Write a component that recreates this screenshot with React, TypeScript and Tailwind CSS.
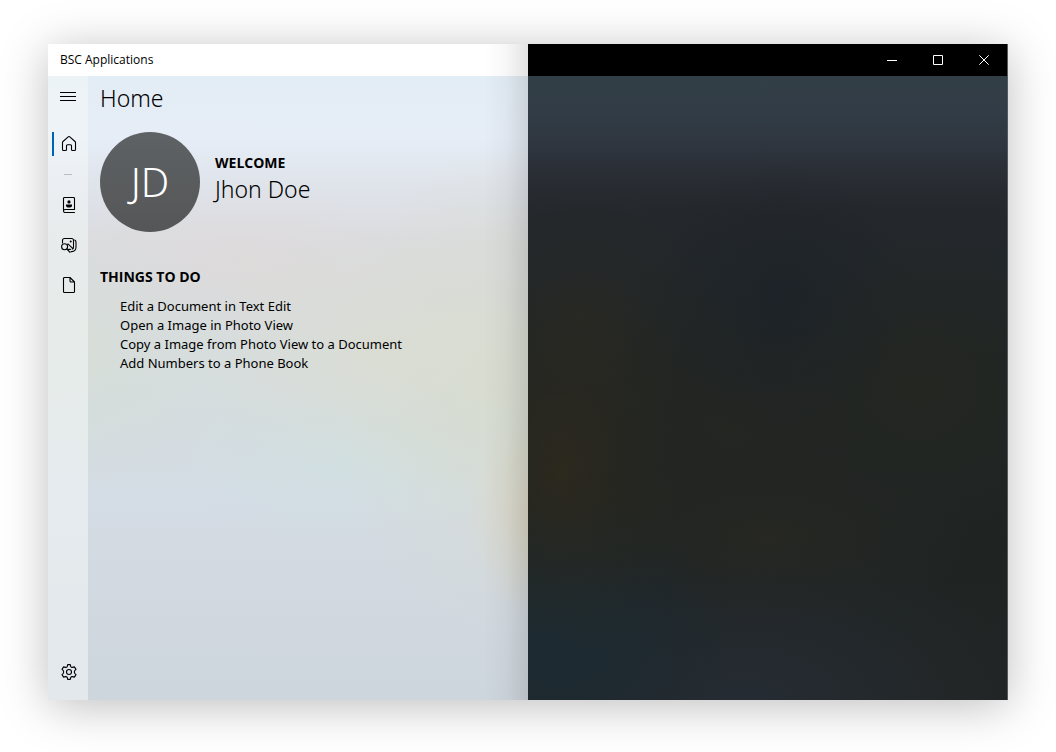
import type { ReactNode } from "react";

function Icon({ children }: { children: ReactNode }) {
  return (
    <svg
      width="16"
      height="16"
      viewBox="0 0 16 16"
      fill="none"
      stroke="currentColor"
      strokeWidth="1.1"
      strokeLinecap="round"
      strokeLinejoin="round"
      aria-hidden="true"
    >
      {children}
    </svg>
  );
}

function HomeIcon() {
  return (
    <Icon>
      <path d="M1.5 6.6Q1.5 6 2 5.5L7.2 .9Q8 .2 8.8 .9L14 5.5Q14.5 6 14.5 6.6V13.5Q14.5 14.5 13.5 14.5H11.5Q10.5 14.5 10.5 13.5V9.7Q10.5 8.7 9.5 8.7H6.5Q5.5 8.7 5.5 9.7V13.5Q5.5 14.5 4.5 14.5H2.5Q1.5 14.5 1.5 13.5Z" />
    </Icon>
  );
}

function ContactIcon() {
  return (
    <Icon>
      <path d="M13.5 12.5V1.5Q13.5 .5 12.5 .5H3.5Q2.5 .5 2.5 1.5V14Q2.5 15.5 4 15.5H13.5M2.5 14Q2.5 12.5 4 12.5H13.5" />
      <circle cx="8" cy="4.9" r="1.6" fill="currentColor" stroke="none" />
      <path d="M5 7.5H11V8.6Q11 10.6 8 10.6T5 8.6Z" fill="currentColor" stroke="none" />
    </Icon>
  );
}

function PhotoIcon() {
  return (
    <Icon>
      <path d="M1.5 6V3.5Q1.5 1.5 3.5 1.5H10.5Q12.5 1.5 12.5 3.5V10Q12.5 11.6 11.2 12.1" />
      <path d="M13.7 3Q15 3.6 15 5.2V10Q15 14.6 10.6 14.6H10" />
      <circle cx="3.6" cy="9.8" r="3" />
      <path d="M5.9 12L9 15.3M6.4 7.3L7.2 7.1L12 11.7M7.6 12.4H9.4" />
      <circle cx="9.7" cy="4.6" r="1" fill="currentColor" stroke="none" />
    </Icon>
  );
}

function DocumentIcon() {
  return (
    <Icon>
      <path d="M9 .5H3.5Q2.5 .5 2.5 1.5V14.5Q2.5 15.5 3.5 15.5H12.5Q13.5 15.5 13.5 14.5V5ZM9 .5V4Q9 5 10 5H13.5" />
    </Icon>
  );
}

function GearIcon() {
  return (
    <Icon>
      <path d="M6.7 .6H9.3L9.7 2.4Q10.2 3.5 11.4 3.4L13.4 2.9L15 5.4L13.7 6.7Q12.9 8 13.7 9.3L15 10.6L13.4 13.1L11.4 12.6Q10.2 12.5 9.7 13.6L9.3 15.4H6.7L6.3 13.6Q5.8 12.5 4.6 12.6L2.6 13.1L1 10.6L2.3 9.3Q3.1 8 2.3 6.7L1 5.4L2.6 2.9L4.6 3.4Q5.8 3.5 6.3 2.4Z" />
      <circle cx="8" cy="8" r="2.5" />
    </Icon>
  );
}

function RailButton({ label, active, children }: { label: string; active?: boolean; children: ReactNode }) {
  return (
    <button
      type="button"
      aria-label={label}
      aria-current={active ? "page" : undefined}
      className="relative flex h-10 w-10 items-center justify-center pl-0.5"
    >
      {active && <span className="absolute top-2 left-1 h-6 w-0.5 bg-[#0063b1]" />}
      {children}
    </button>
  );
}

function CaptionButton({ label, children }: { label: string; children: ReactNode }) {
  return (
    <button type="button" aria-label={label} className="flex h-8 w-[46px] items-center justify-center">
      <svg width="10" height="10" viewBox="0 0 10 10" fill="none" stroke="currentColor" aria-hidden="true">
        {children}
      </svg>
    </button>
  );
}

const tasks = [
  "Edit a Document in Text Edit",
  "Open a Image in Photo View",
  "Copy a Image from Photo View to a Document",
  "Add Numbers to a Phone Book",
];

const lightBackdrop = [
  "radial-gradient(ellipse 80px 110px at 104% 70%, rgba(224,210,176,.7), rgba(224,210,176,.3) 50%, transparent)",
  "radial-gradient(ellipse 170px 240px at 94% 50%, rgba(217,220,203,.75), rgba(217,220,203,.35) 50%, transparent)",
  "radial-gradient(ellipse 170px 130px at 66% 44%, rgba(221,221,208,.6), rgba(221,221,208,.25) 50%, transparent)",
  "radial-gradient(ellipse 180px 80px at 40% 30%, rgba(226,217,215,.5), rgba(226,217,215,.2) 50%, transparent)",
  "radial-gradient(ellipse 190px 80px at 64% 62%, rgba(206,225,224,.6), rgba(206,225,224,.25) 50%, transparent)",
  "radial-gradient(ellipse 160px 140px at 2% 44%, rgba(214,222,212,.6), rgba(214,222,212,.25) 50%, transparent)",
  "linear-gradient(#e3edf5, #e6edf6 10%, #dfe3ea 18%, #dbdce0 26%, #d8dcde 34%, #d6dddd 46%, #d4dcdf 56%, #d4dce5 67%, #d2d9e0 80%, #ced6dd)",
].join(",");

const darkBackdrop = [
  "radial-gradient(ellipse 130px 190px at 7% 63%, rgba(46,41,29,.85), rgba(46,41,29,.35) 50%, transparent)",
  "radial-gradient(ellipse 130px 150px at 12% 40%, rgba(44,42,35,.6), rgba(44,42,35,.2) 50%, transparent)",
  "radial-gradient(ellipse 130px 140px at 53% 36%, rgba(28,34,40,.8), rgba(28,34,40,.3) 50%, transparent)",
  "radial-gradient(ellipse 170px 140px at 42% 56%, rgba(38,38,32,.6), rgba(38,38,32,.2) 50%, transparent)",
  "radial-gradient(ellipse 180px 160px at 82% 50%, rgba(38,39,33,.7), rgba(38,39,33,.25) 50%, transparent)",
  "radial-gradient(ellipse 210px 90px at 50% 74%, rgba(42,41,35,.7), rgba(42,41,35,.25) 50%, transparent)",
  "radial-gradient(ellipse 180px 150px at 4% 90%, rgba(27,43,52,.9), rgba(27,43,52,.5) 50%, transparent)",
  "radial-gradient(ellipse 300px 160px at 45% 100%, rgba(37,44,52,.95), rgba(37,44,52,.5) 50%, transparent)",
  "linear-gradient(#333f47, #313c46 6%, #2f363f 11%, #292d34 16%, #24282c 22%, #22272a 30%, #202524 45%, #1f2423 75%, #212422)",
].join(",");

export default function App() {
  return (
    <div className="flex min-h-screen bg-white px-12 pt-11 pb-[52px] font-['Noto_Sans','Open_Sans',sans-serif] text-black">
      <div className="grid flex-1 grid-cols-2 shadow-[0_6px_44px_rgba(0,0,0,0.26)]">
        <section className="relative flex flex-col">
          <header className="flex h-8 items-center bg-white px-3 font-['Open_Sans','Noto_Sans',sans-serif] text-xs">
            BSC Applications
          </header>
          <div className="flex flex-1" style={{ background: lightBackdrop }}>
            <nav className="flex w-10 flex-col bg-[#f4f8f8]/55 pb-2">
              <button type="button" aria-label="Menu" className="flex h-10 w-10 items-center justify-center">
                <svg width="16" height="16" viewBox="0 0 16 16" stroke="currentColor" aria-hidden="true">
                  <path d="M0 4.5H16M0 8.5H16M0 12.5H16" />
                </svg>
              </button>
              <div className="mt-2 flex flex-1 flex-col">
                <RailButton label="Home" active><HomeIcon /></RailButton>
                <hr className="mx-4 mt-2.5 mb-2.5 border-[#b9bec2]" />
                <RailButton label="Phone Book"><ContactIcon /></RailButton>
                <RailButton label="Photo View"><PhotoIcon /></RailButton>
                <RailButton label="Text Edit"><DocumentIcon /></RailButton>
              </div>
              <RailButton label="Settings"><GearIcon /></RailButton>
            </nav>
            <main className="flex-1 px-3 pt-1.5">
              <h1 className="text-[23px] leading-8 font-light">Home</h1>
              <div className="mt-[18px] flex items-center gap-[15px]">
                <div className="flex size-[100px] items-center justify-center rounded-full bg-linear-to-b from-[#5e6265] to-[#555657] text-[40px] font-light text-white">
                  JD
                </div>
                <div className="pb-1.5">
                  <p className="font-['Open_Sans','Noto_Sans',sans-serif] text-sm leading-5 font-bold">WELCOME</p>
                  <p className="text-[23px] leading-8 font-light">Jhon Doe</p>
                </div>
              </div>
              <h2 className="mt-[35px] font-['Open_Sans','Noto_Sans',sans-serif] text-sm leading-5 font-bold">
                THINGS TO DO
              </h2>
              <ul className="mt-2.5 pl-5 text-[13px] leading-[19px]">
                {tasks.map((task) => (
                  <li key={task}>{task}</li>
                ))}
              </ul>
            </main>
          </div>
          <div className="pointer-events-none absolute inset-y-0 right-0 w-11 bg-linear-to-r from-transparent via-black/3 to-black/11" />
        </section>
        <section className="flex flex-col border-r border-[#53595d] text-white">
          <header className="flex h-8 justify-end bg-black">
            <CaptionButton label="Minimize"><path d="M0 5.5H10" /></CaptionButton>
            <CaptionButton label="Maximize"><path d="M.5 .5H9.5V9.5H.5Z" /></CaptionButton>
            <CaptionButton label="Close"><path d="M.3 .3L9.7 9.7M9.7 .3L.3 9.7" /></CaptionButton>
          </header>
          <div className="flex-1" style={{ background: darkBackdrop }} />
        </section>
      </div>
    </div>
  );
}
